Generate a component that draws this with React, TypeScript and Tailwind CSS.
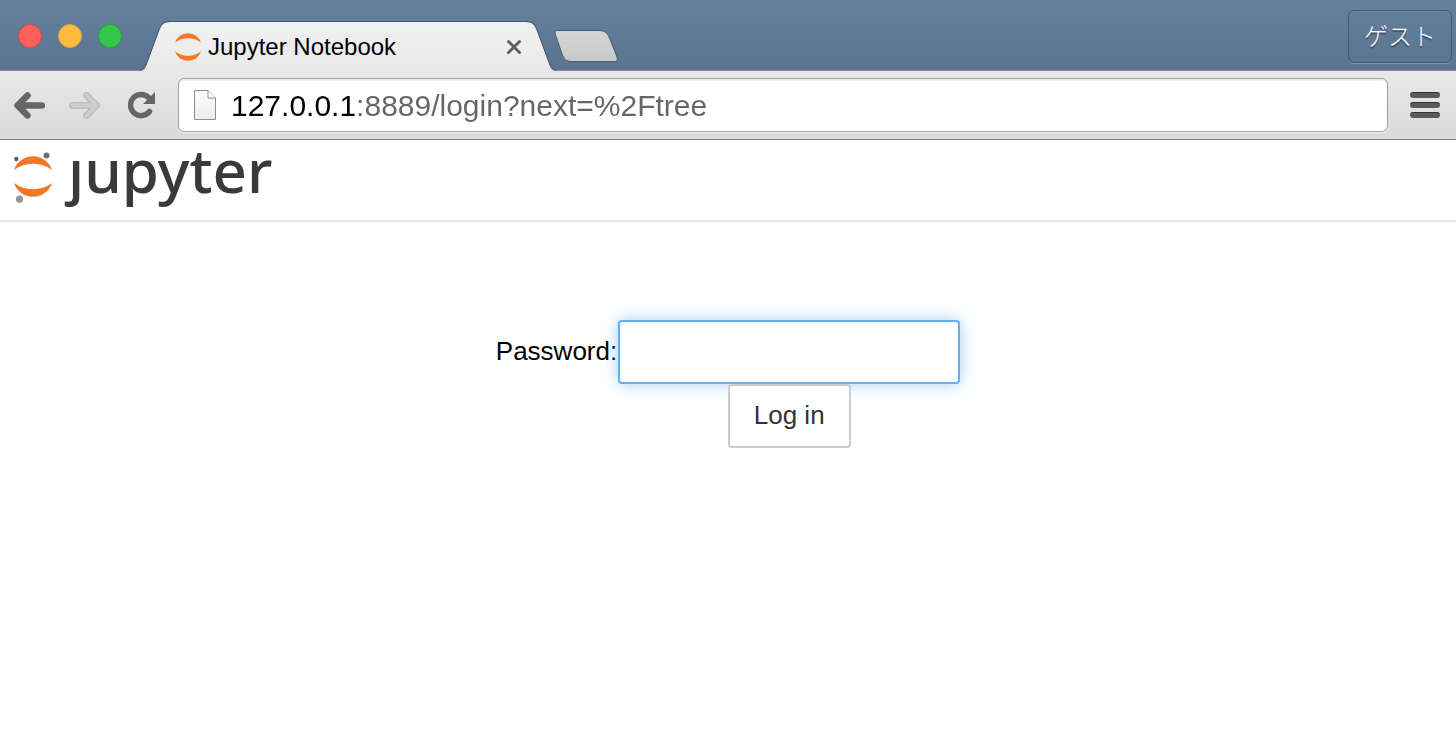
import { useState } from 'react';

function JupyterArcs() {
  return (
    <g fill="#f37726">
      <path d="M0 14 A20 20 0 0 1 38 14 A32 32 0 0 0 0 14 Z" />
      <path d="M0 27 A20 20 0 0 0 38 27 A32 32 0 0 1 0 27 Z" />
    </g>
  );
}

function TrafficLights() {
  return (
    <div className="mt-6 flex gap-4 self-start pl-[18px]">
      <button aria-label="Close window" className="size-6 rounded-full border border-[#e2463f] bg-[#fc605c]" />
      <button aria-label="Minimize window" className="size-6 rounded-full border border-[#e0a033] bg-[#fdbc40]" />
      <button aria-label="Zoom window" className="size-6 rounded-full border border-[#28a435] bg-[#34c84a]" />
    </div>
  );
}

function ActiveTab() {
  return (
    <div className="relative z-10 -mb-px ml-[18px] flex h-[50px]">
      <svg width="32" height="50" viewBox="0 0 32 50" className="shrink-0" aria-hidden="true">
        <defs>
          <linearGradient id="tabFill" gradientUnits="userSpaceOnUse" x1="0" y1="1" x2="0" y2="50">
            <stop offset="0" stopColor="#f1f1f1" />
            <stop offset="1" stopColor="#e9e9e9" />
          </linearGradient>
        </defs>
        <path d="M0 50 V49.500 C4 49 5 47 6.500 43 L18 12 C21 4 23 1 30 1 H32 V50 Z" fill="url(#tabFill)" />
        <path d="M0 49.500 C4 49 5 47 6.500 43 L18 11.500 C21 3.500 23 .5 30 .5 H32" fill="none" stroke="#3d5470" />
      </svg>
      <div className="flex w-[352px] items-center justify-between border-t border-[#3d5470] bg-linear-to-b from-[#f1f1f1] to-[#e9e9e9] pr-[2px] pl-[3px]">
        <a href="#notebook" className="flex items-center gap-[7px] text-2xl text-black">
          <svg width="26" height="28" viewBox="0 0 38 41" aria-hidden="true">
            <JupyterArcs />
          </svg>
          Jupyter Notebook
        </a>
        <button aria-label="Close tab">
          <svg width="16" height="16" viewBox="0 0 16 16" fill="none" stroke="#606060" strokeWidth="3" strokeLinecap="round">
            <path d="M2.500 2.500 L13.500 13.500 M13.500 2.500 L2.500 13.500" />
          </svg>
        </button>
      </div>
      <svg width="32" height="50" viewBox="0 0 32 50" className="shrink-0" aria-hidden="true">
        <path d="M32 50 V49.500 C28 49 27 47 25.500 43 L14 12 C11 4 9 1 2 1 H0 V50 Z" fill="url(#tabFill)" />
        <path d="M32 49.500 C28 49 27 47 25.500 43 L14 11.500 C11 3.500 9 .5 2 .5 H0" fill="none" stroke="#3d5470" />
      </svg>
    </div>
  );
}

function TitleBar() {
  return (
    <div className="flex h-[71px] items-end border-b border-[#8b8b90] bg-linear-to-b from-[#66819d] to-[#5a7390]">
      <TrafficLights />
      <ActiveTab />
      <button aria-label="New tab" className="mb-2 -ml-1">
        <svg width="66" height="34" viewBox="0 0 66 34">
          <defs>
            <linearGradient id="newTab" x1="0" y1="0" x2="0" y2="1">
              <stop offset="0" stopColor="#d6d6d6" />
              <stop offset="1" stopColor="#c8c8c8" />
            </linearGradient>
          </defs>
          <path
            d="M6 2.500 H46 C52 2.500 55 4 57.500 10 L65 29 C66 32 65 33.500 62 33.500 H20 C14 33.500 12 31 10 26 L3.500 7 C2.500 4 3 2.500 6 2.500 Z"
            fill="url(#newTab)"
            stroke="#435b77"
          />
        </svg>
      </button>
      <button className="mt-[10px] mr-1 ml-auto h-[53px] self-start rounded-md border border-[#435a74] px-[15px] text-2xl font-light text-white shadow-[inset_0_1px_0_#7189a4,0_1px_0_#7b92ab] text-shadow-[0_2px_1px_#3b4f66]">
        ゲスト
      </button>
    </div>
  );
}

function Toolbar() {
  const [url, setUrl] = useState('127.0.0.1:8889/login?next=%2Ftree');

  return (
    <div className="flex items-center border-b border-[#808080] bg-linear-to-b from-[#e9e9e9] to-[#dadada] py-[7px] pr-4 pl-[14px]">
      <div className="flex items-center gap-6 pr-[22px]">
        <button aria-label="Back">
          <svg width="31" height="28" viewBox="0 0 31 28" fill="none" stroke="#666" strokeWidth="6.500" strokeLinecap="round" strokeLinejoin="round">
            <path d="M28 14.500 H5 M13.500 4.500 L3.500 14.500 L13.500 24.500" />
          </svg>
        </button>
        <button aria-label="Forward">
          <svg width="31" height="28" viewBox="0 0 31 28" fill="none" strokeLinecap="round" strokeLinejoin="round">
            <path d="M3.500 14.500 H26 M17.500 4.500 L27.500 14.500 L17.500 24.500" stroke="#b5b5b5" strokeWidth="6.500" />
            <path d="M3.500 14.500 H26 M17.500 4.500 L27.500 14.500 L17.500 24.500" stroke="#cdcdcd" strokeWidth="4.500" />
          </svg>
        </button>
        <button aria-label="Reload" className="pl-1">
          <svg width="28" height="28" viewBox="0 0 28 28">
            <path d="M21.500 20.500 A10.600 10.600 0 1 1 21 7" fill="none" stroke="#666" strokeWidth="5.500" strokeLinecap="round" />
            <path d="M27 1 V13 H15 Z" fill="#666" />
          </svg>
        </button>
      </div>
      <div className="flex h-[54px] flex-1 items-center gap-[14px] rounded-md border border-[#a0a0a0] bg-white pl-[14px] shadow-[inset_0_2px_1px_#efefef,0_1px_0_#f3f3f3]">
        <svg width="24" height="32" viewBox="0 0 24 32" className="shrink-0" aria-hidden="true">
          <defs>
            <linearGradient id="page" x1="0" y1="0" x2="0" y2="1">
              <stop offset="0" stopColor="#fff" />
              <stop offset="1" stopColor="#ececec" />
            </linearGradient>
          </defs>
          <path d="M1.500 1.500 H15 L22.500 9 V30.500 H1.500 Z" fill="url(#page)" stroke="#8e8e8e" />
          <path d="M15 1.500 V9 H22.500" fill="#fff" stroke="#8e8e8e" />
        </svg>
        <input
          type="text"
          aria-label="Address"
          value={url}
          onChange={(e) => setUrl(e.target.value)}
          spellCheck={false}
          className="h-full min-w-0 flex-1 bg-linear-to-r from-black from-[126px] to-[#666] to-[126px] bg-clip-text pt-[2px] text-[30px] text-transparent caret-black outline-none"
        />
      </div>
      <button aria-label="Menu" className="ml-[22px] flex flex-col gap-1">
        <span className="h-[6px] w-[30px] rounded-full border-t border-[#333] bg-[#5a5a5a]" />
        <span className="h-[6px] w-[30px] rounded-full border-t border-[#333] bg-[#5a5a5a]" />
        <span className="h-[6px] w-[30px] rounded-full border-t border-[#333] bg-[#5a5a5a]" />
      </button>
    </div>
  );
}

function Logo() {
  return (
    <a href="#home" aria-label="jupyter" className="flex items-start gap-4 text-[#3a3a3c]">
      <svg width="38" height="52" viewBox="0 0 38 52" aria-hidden="true">
        <g transform="translate(0 4)">
          <JupyterArcs />
        </g>
        <circle cx="2.300" cy="7" r="2.200" fill="#5f6064" />
        <circle cx="32.500" cy="3.500" r="3" fill="#6d6e71" />
        <circle cx="5.500" cy="47.200" r="3.600" fill="#939598" />
      </svg>
      <span className="font-['Noto_Sans',sans-serif] text-[60px] leading-9 font-medium">ȷupyter</span>
    </a>
  );
}

export default function App() {
  return (
    <div className="min-h-screen bg-white font-['Liberation_Sans','Noto_Sans_CJK_JP',sans-serif]">
      <TitleBar />
      <Toolbar />
      <header className="flex h-[82px] items-start border-b-2 border-[#e7e7e7] px-[14px] pt-3">
        <Logo />
      </header>
      <main className="flex justify-center pt-[98px] text-[26px]">
        <form className="grid grid-cols-[auto_auto] items-center gap-x-px" onSubmit={(e) => e.preventDefault()}>
          <label htmlFor="password" className="pb-[2px] text-black">
            Password:
          </label>
          <input
            id="password"
            type="password"
            className="h-16 w-[342px] rounded-sm border-2 border-[#66afe9] bg-white px-6 text-[#555] shadow-[inset_0_2px_2px_rgba(0,0,0,0.03),0_0_16px_rgba(102,175,233,0.6)] outline-none"
          />
          <button
            type="submit"
            className="relative col-start-2 h-16 justify-self-center rounded-sm border-2 border-[#ccc] bg-white px-6 pb-[2px] text-[#333]"
          >
            Log in
          </button>
        </form>
      </main>
    </div>
  );
}
